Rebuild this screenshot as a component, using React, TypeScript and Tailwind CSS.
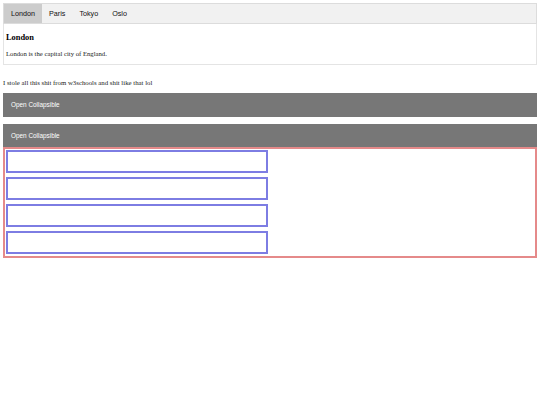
import React from "react";

const tabs = ["London", "Paris", "Tokyo", "Oslo"];

export default function App() {
  return (
    <div className="bg-white min-h-[405px] px-[3px] pt-[3px] font-['Liberation_Serif',serif] text-black">
      <div className="flex h-[21px] border border-[#dcdcdc] bg-[#f1f1f1]">
        {tabs.map((t, i) => (
          <button
            key={t}
            className={`h-full px-[7px] text-[7.2px] leading-none font-['Liberation_Sans',Arial,sans-serif] text-[#111111] ${i === 0 ? "bg-[#cccccc]" : ""}`}
          >
            {t}
          </button>
        ))}
      </div>
      <div className="h-[41px] border border-t-0 border-[#e4e4e4] px-[2px] pt-[10px]">
        <h3 className="text-[8.4px] font-bold leading-[8px]">London</h3>
        <p className="mt-[8px] text-[6.7px] leading-[8px] text-[#222222]">London is the capital city of England.</p>
      </div>
      <p className="mt-[14px] text-[6.8px] leading-[8px] text-[#222222]">I stole all this shit from w3schools and shit like that lol</p>
      <div className="mt-[6px] flex h-[24px] items-center bg-[#777777] px-[8px] text-[6.4px] text-white font-['Liberation_Sans',Arial,sans-serif]">
        Open Collapsible
      </div>
      <div className="mt-[7px] flex h-[23px] items-center bg-[#777777] px-[8px] text-[6.4px] text-white font-['Liberation_Sans',Arial,sans-serif]">
        Open Collapsible
      </div>
      <div className="flex flex-col gap-[4.5px] border-2 border-[#e58a8a] px-[1px] pt-[1px] pb-[2px]">
        {[0, 1, 2, 3].map((i) => (
          <div key={i} className="h-[22.5px] w-[262px] border-2 border-[#7d7de3]" />
        ))}
      </div>
    </div>
  );
}
